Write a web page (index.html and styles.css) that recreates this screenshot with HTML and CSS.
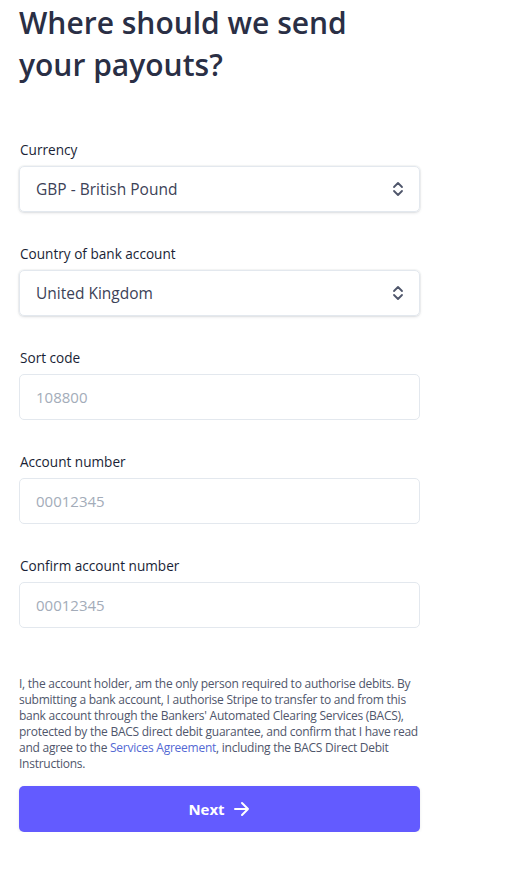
FILE: index.html
```html
<!DOCTYPE html>
<html lang="en">
<head>
<meta charset="utf-8">
<title>Payouts</title>
<link rel="stylesheet" href="styles.css">
</head>
<body>
<main class="page">
  <h1 class="title">Where should we send your payouts?</h1>
  <form class="form">
    <div class="field">
      <label class="label">Currency</label>
      <div class="select">
        <span class="select-value">GBP - British Pound</span>
        <svg class="chevrons" width="12" height="18" viewBox="0 0 12 18"><path d="M2 7 L6 3 L10 7 M2 11 L6 15 L10 11" fill="none" stroke="#4f566b" stroke-width="1.8" stroke-linecap="round" stroke-linejoin="round"/></svg>
      </div>
    </div>
    <div class="field">
      <label class="label">Country of bank account</label>
      <div class="select">
        <span class="select-value">United Kingdom</span>
        <svg class="chevrons" width="12" height="18" viewBox="0 0 12 18"><path d="M2 7 L6 3 L10 7 M2 11 L6 15 L10 11" fill="none" stroke="#4f566b" stroke-width="1.8" stroke-linecap="round" stroke-linejoin="round"/></svg>
      </div>
    </div>
    <div class="field">
      <label class="label">Sort code</label>
      <input class="input" placeholder="108800">
    </div>
    <div class="field">
      <label class="label">Account number</label>
      <input class="input" placeholder="00012345">
    </div>
    <div class="field">
      <label class="label">Confirm account number</label>
      <input class="input" placeholder="00012345">
    </div>
    <p class="legal">I, the account holder, am the only person required to authorise debits. By submitting a bank account, I authorise Stripe to transfer to and from this bank account through the Bankers' Automated Clearing Services (BACS), protected by the BACS direct debit guarantee, and confirm that I have read and agree to the <a class="link" href="#">Services Agreement</a>, including the BACS Direct Debit Instructions.</p>
    <button type="button" class="button">Next
      <svg width="18" height="16" viewBox="0 0 18 16"><path d="M2 8 H15 M9 2 L15 8 L9 14" fill="none" stroke="#fff" stroke-width="2" stroke-linecap="round" stroke-linejoin="round"/></svg>
    </button>
  </form>
</main>
</body>
</html>
```

FILE: styles.css
```css
* { box-sizing: border-box; }
body {
  margin: 0;
  background: #fff;
  font-family: "Open Sans", "Noto Sans", sans-serif;
  color: #1a1f36;
}
.page {
  width: 401px;
  margin-left: 19px;
  padding-top: 2px;
}
.title {
  margin: 0;
  font-size: 30px;
  line-height: 42px;
  font-weight: 600;
  color: #2a2f45;
  width: 360px;
}
.form {
  display: flex;
  flex-direction: column;
  margin-top: 55px;
}
.field {
  display: flex;
  flex-direction: column;
  margin-bottom: 33px;
}
.label {
  font-size: 13.6px;
  line-height: 18px;
  font-weight: 500;
  color: #1a1f36;
  padding-left: 1px;
  margin-bottom: 7px;
}
.select {
  height: 46px;
  border: 1px solid #e3e8ee;
  border-radius: 5px;
  box-shadow: 0 1px 3px rgba(60, 66, 87, 0.16), 0 0 0 1px rgba(60, 66, 87, 0.04);
  display: flex;
  align-items: center;
  justify-content: space-between;
  padding: 0 15px 0 16px;
}
.select-value {
  font-size: 15.5px;
  font-weight: 500;
  color: #3c4257;
}
.input {
  height: 46px;
  border: 1px solid #e3e8ee;
  border-radius: 5px;
  padding: 0 16px;
  font-family: inherit;
  font-size: 15px;
  color: #3c4257;
  outline: none;
}
.input::placeholder { color: #a3acb9; }
.legal {
  margin: 15px 0 14px;
  font-size: 12px;
  letter-spacing: -0.25px;
  line-height: 16px;
  color: #4f566b;
}
.link { color: #5469d4; text-decoration: none; }
.button {
  height: 46px;
  border: none;
  border-radius: 5px;
  background: #635bff;
  color: #fff;
  font-family: inherit;
  font-size: 15px;
  font-weight: 700;
  display: flex;
  align-items: center;
  justify-content: center;
  gap: 8px;
  box-shadow: 0 1px 3px rgba(60, 66, 87, 0.12);
}
```
